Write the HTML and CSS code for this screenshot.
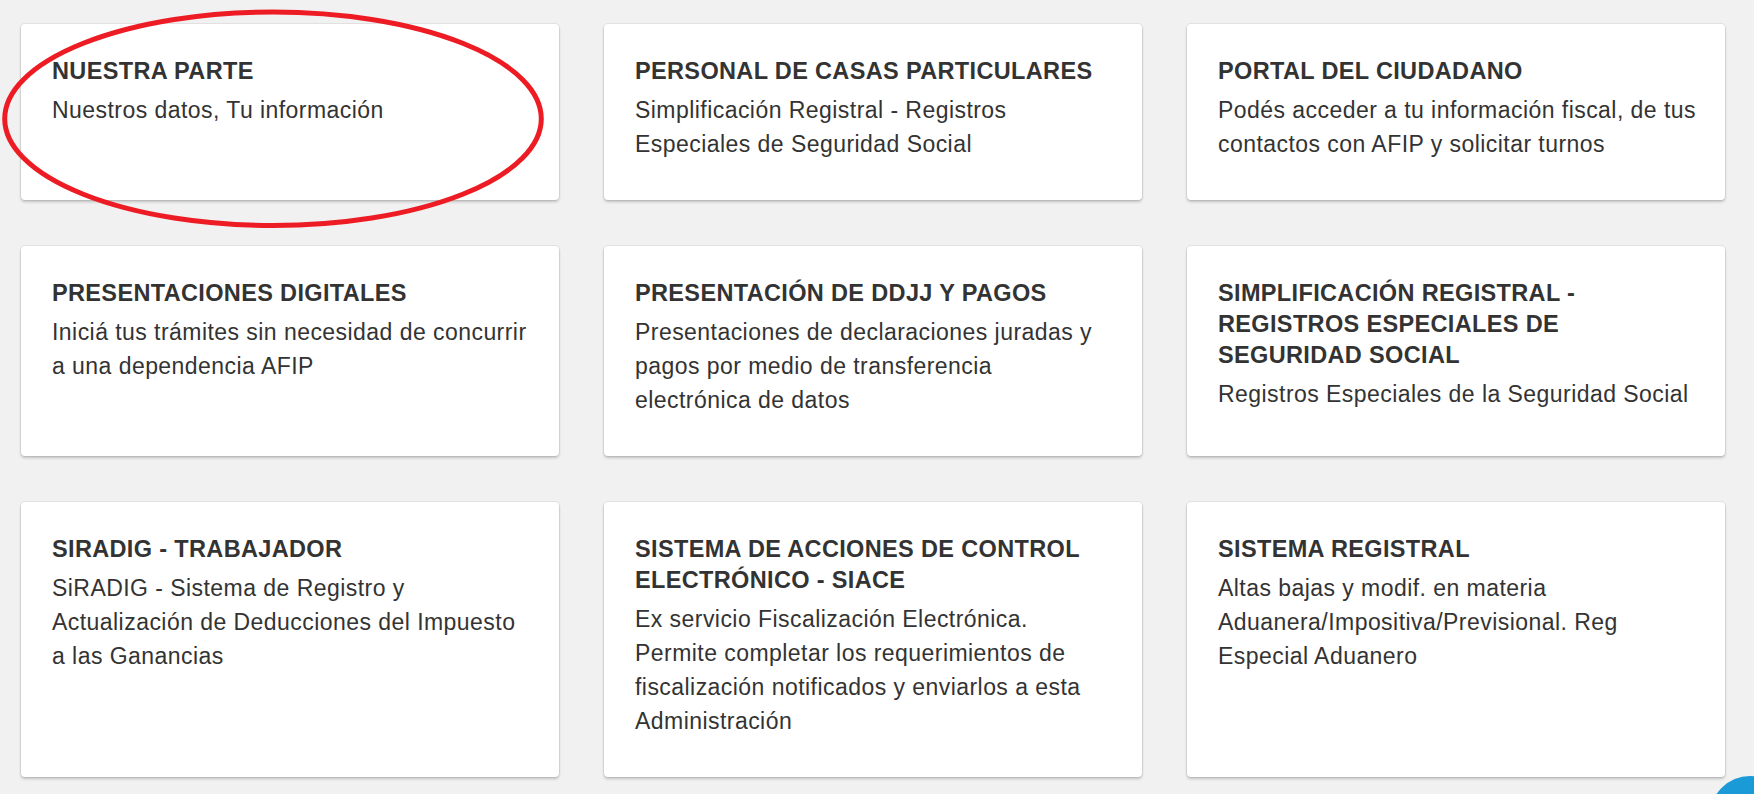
FILE: index.html
```html
<!DOCTYPE html>
<html lang="es">
<head>
<meta charset="utf-8">
<title>Servicios</title>
<link rel="stylesheet" href="styles.css">
</head>
<body>
<main class="grid">
  <a class="card">
    <h3 class="card-title">NUESTRA PARTE</h3>
    <p class="card-text">Nuestros datos, Tu información</p>
  </a>
  <a class="card">
    <h3 class="card-title">PERSONAL DE CASAS PARTICULARES</h3>
    <p class="card-text">Simplificación Registral - Registros<br>Especiales de Seguridad Social</p>
  </a>
  <a class="card">
    <h3 class="card-title">PORTAL DEL CIUDADANO</h3>
    <p class="card-text">Podés acceder a tu información fiscal, de tus<br>contactos con AFIP y solicitar turnos</p>
  </a>
  <a class="card">
    <h3 class="card-title">PRESENTACIONES DIGITALES</h3>
    <p class="card-text">Iniciá tus trámites sin necesidad de concurrir<br>a una dependencia AFIP</p>
  </a>
  <a class="card">
    <h3 class="card-title">PRESENTACIÓN DE DDJJ Y PAGOS</h3>
    <p class="card-text">Presentaciones de declaraciones juradas y<br>pagos por medio de transferencia<br>electrónica de datos</p>
  </a>
  <a class="card">
    <h3 class="card-title">SIMPLIFICACIÓN REGISTRAL -<br>REGISTROS ESPECIALES DE<br>SEGURIDAD SOCIAL</h3>
    <p class="card-text">Registros Especiales de la Seguridad Social</p>
  </a>
  <a class="card">
    <h3 class="card-title">SIRADIG - TRABAJADOR</h3>
    <p class="card-text">SiRADIG - Sistema de Registro y<br>Actualización de Deducciones del Impuesto<br>a las Ganancias</p>
  </a>
  <a class="card">
    <h3 class="card-title">SISTEMA DE ACCIONES DE CONTROL<br>ELECTRÓNICO - SIACE</h3>
    <p class="card-text">Ex servicio Fiscalización Electrónica.<br>Permite completar los requerimientos de<br>fiscalización notificados y enviarlos a esta<br>Administración</p>
  </a>
  <a class="card">
    <h3 class="card-title">SISTEMA REGISTRAL</h3>
    <p class="card-text">Altas bajas y modif. en materia<br>Aduanera/Impositiva/Previsional. Reg<br>Especial Aduanero</p>
  </a>
</main>
<svg class="annotation" width="550" height="235" viewBox="0 0 550 235" aria-hidden="true">
  <ellipse cx="273" cy="118.75" rx="268.3" ry="106.75" fill="none" stroke="#ed1c24" stroke-width="5"/>
</svg>
<div class="chat-button" aria-hidden="true"></div>
</body>
</html>
```

FILE: styles.css
```css
html, body {
  margin: 0;
  padding: 0;
  background: #f1f1f1;
}

body {
  font-family: "Liberation Sans", Arial, sans-serif;
  color: #333333;
  overflow: hidden;
  height: 794px;
  position: relative;
}

.grid {
  display: grid;
  grid-template-columns: repeat(3, 538px);
  column-gap: 45px;
  row-gap: 46px;
  padding: 24px 0 0 21px;
  align-items: stretch;
}

.card {
  display: block;
  background: #ffffff;
  border-radius: 4px;
  box-shadow: 0 0 0 1px rgba(0, 0, 0, 0.06), 0 2px 3px rgba(0, 0, 0, 0.2);
  padding: 31.5px 20px 39.5px 31px;
  text-decoration: none;
  color: inherit;
}

.card-title {
  margin: 0 0 6px 0;
  font-size: 23.5px;
  line-height: 31px;
  font-weight: bold;
  letter-spacing: 0.35px;
  white-space: nowrap;
}

.card-text {
  margin: 0;
  font-size: 23px;
  line-height: 34px;
  letter-spacing: 0.45px;
  white-space: nowrap;
}

.annotation {
  position: absolute;
  left: 0;
  top: 0;
  pointer-events: none;
}

.chat-button {
  position: absolute;
  left: 1710px;
  top: 776px;
  width: 80px;
  height: 80px;
  border-radius: 50%;
  background: #1a9ad6;
}
```
